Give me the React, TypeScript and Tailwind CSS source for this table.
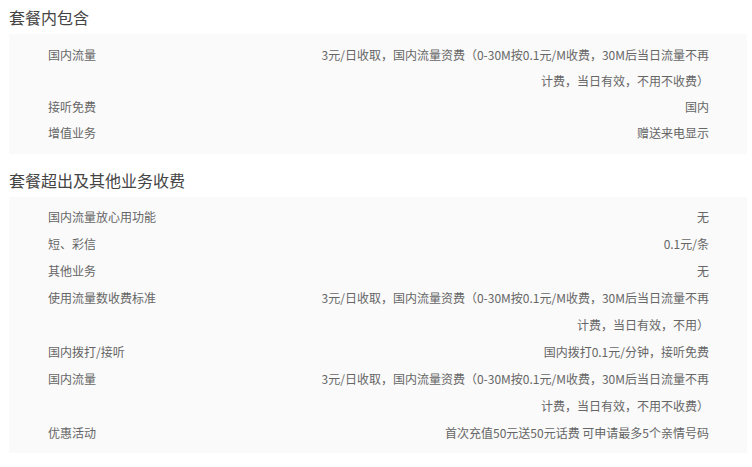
import React from 'react';

type Row = { label: string; value: string[] };

const included: Row[] = [
  { label: '国内流量', value: ['3元/日收取，国内流量资费（0-30M按0.1元/M收费，30M后当日流量不再', '计费，当日有效，不用不收费）'] },
  { label: '接听免费', value: ['国内'] },
  { label: '增值业务', value: ['赠送来电显示'] },
];

const extra: Row[] = [
  { label: '国内流量放心用功能', value: ['无'] },
  { label: '短、彩信', value: ['0.1元/条'] },
  { label: '其他业务', value: ['无'] },
  { label: '使用流量数收费标准', value: ['3元/日收取，国内流量资费（0-30M按0.1元/M收费，30M后当日流量不再', '计费，当日有效，不用）'] },
  { label: '国内拨打/接听', value: ['国内拨打0.1元/分钟，接听免费'] },
  { label: '国内流量', value: ['3元/日收取，国内流量资费（0-30M按0.1元/M收费，30M后当日流量不再', '计费，当日有效，不用不收费）'] },
  { label: '优惠活动', value: ['首次充值50元送50元话费 可申请最多5个亲情号码'] },
];

function Table({ rows, className }: { rows: Row[]; className: string }) {
  return (
    <div className={`bg-[#fafafa] pl-[39px] pr-[38px] text-[12px] text-[#666] [text-spacing-trim:space-all] ${className}`}>
      {rows.map((r, i) => (
        <div key={i} className="flex justify-between">
          <span className="whitespace-nowrap">{r.label}</span>
          <div className="text-right">
            {r.value.map((line, j) => (
              <div key={j} className="whitespace-nowrap">{line}</div>
            ))}
          </div>
        </div>
      ))}
    </div>
  );
}

export default function App() {
  return (
    <div className="w-[752px] h-[467px] bg-white px-[9px] pr-[5px] overflow-hidden" style={{ fontFamily: '"Microsoft YaHei", "Noto Sans CJK SC", sans-serif' }}>
      <h2 className="pt-[1px] text-[16px] leading-[33px] text-[#444]">套餐内包含</h2>
      <Table rows={included} className="pt-[8px] pb-[8px] leading-[26px]" />
      <h2 className="mt-[10px] text-[16px] leading-[33px] text-[#444]">套餐超出及其他业务收费</h2>
      <Table rows={extra} className="pt-[6px] pb-[7px] leading-[27px]" />
    </div>
  );
}
